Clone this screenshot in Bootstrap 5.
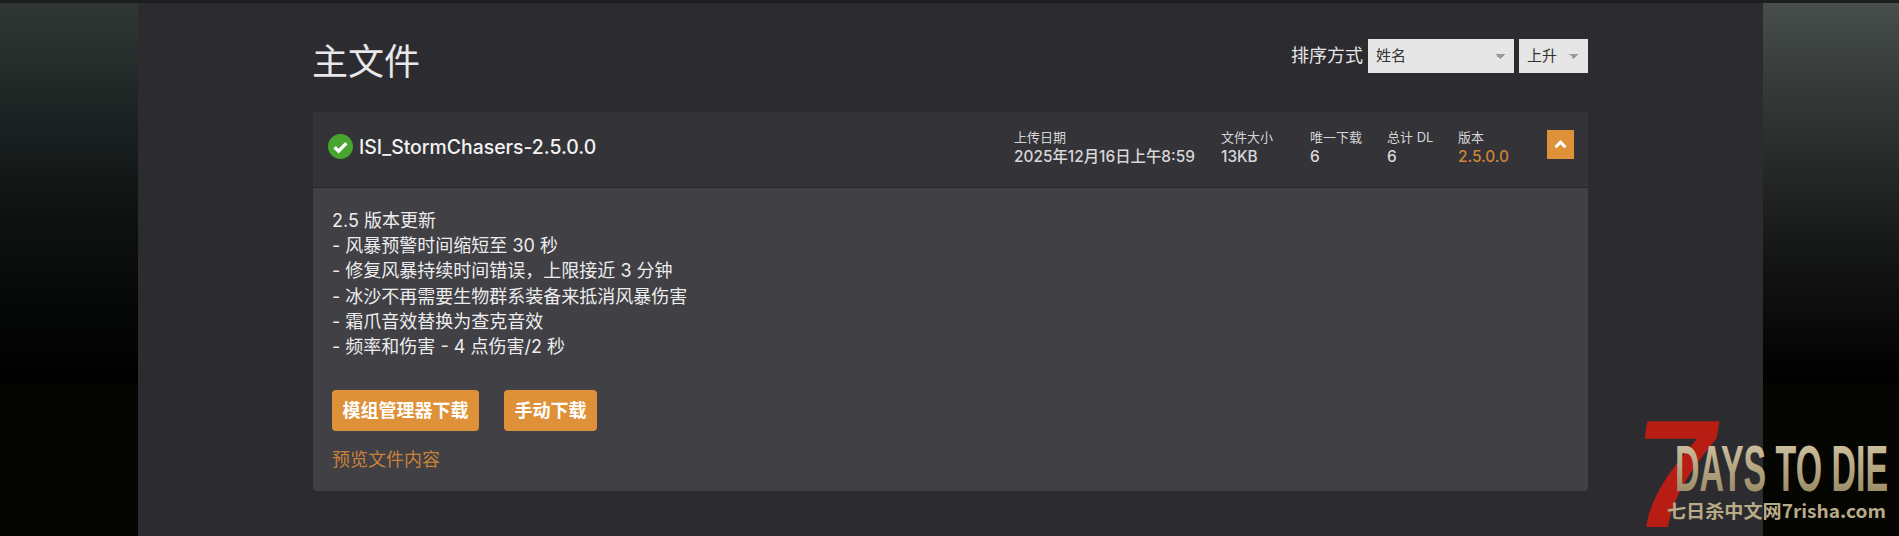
<!doctype html>
<html lang="zh-CN">
<head>
<meta charset="utf-8">
<title>主文件</title>
<link href="https://cdn.jsdelivr.net/npm/bootstrap@5.3.0/dist/css/bootstrap.min.css" rel="stylesheet">
<style>
html,body{height:536px;overflow:hidden}
body{background:#050502;font-family:Inter,"Noto Sans CJK SC","Noto Sans",sans-serif;color:#e6e6e6}
.stage{height:536px;position:relative;border-top:3px solid #1d1f1f}
.side-l{width:138px;flex:none;background:linear-gradient(180deg,#303735 0,#1c2322 110px,#0d1110 220px,#000 377px,#000 381px,#050502 382px)}
.side-r{flex:1 1 0;background:linear-gradient(180deg,#474e4b 0,#2c302e 130px,#131514 260px,#000 377px,#000 381px,#050502 382px)}
.main-col{width:1625px;flex:none;background:#2c2b30;padding:0 175px}
.page-title{font-size:36px;line-height:42px;font-weight:400;color:#e8e8e8;margin:0 0 0 -1px}
.head-row{height:109px}
.title-wrap{padding-top:38px}
.sort-wrap{padding-top:36px;font-size:18px;line-height:34px;color:#e6e6e6}
.sort-label{margin-right:5px}
.sort-select{height:34px;padding:0 0 0 8px;border:0;border-radius:0;font-size:15px;color:#333;background-color:#e6e6e6;
 --bs-form-select-bg-img:none;
 background-image:linear-gradient(45deg,transparent 50%,#999 50%),linear-gradient(-45deg,transparent 50%,#999 50%);
 background-size:5px 5px,5px 5px;background-repeat:no-repeat;background-position:right 14px center,right 9px center}
.sort-a{width:146px}.sort-b{width:69px;margin-left:5px}
.file-card{background:#404045;border:0;border-radius:4px;overflow:hidden;color:#e6e6e6}
.file-head{height:76px;background:#333338;border-bottom:1px solid #29292d;padding:0 14px 0 15px;border-radius:0}
.name-line{margin-top:-5px}
.file-name{font-size:19.4px;font-weight:500;line-height:24px;color:#f2f2f2;margin:0 0 0 6px}
.file-check{width:25px;height:25px;flex:none;margin-top:-1px}
.meta-line{margin-top:-5px}
.meta-box{font-size:13px;line-height:17px;color:#d6d6d6}
.meta-box b{display:block;font-size:15.4px;font-weight:500;line-height:19px;color:#d8d8d8;margin-top:1px}
.meta-box b.ver{color:#cf8437}
.m1{width:207px}.m2{width:89px}.m3{width:77px}.m4{width:71px}.m5{width:89px}
.toggle-btn{width:27px;height:29px;background:#de9138;border:0;border-radius:0;padding:0;display:flex;align-items:center;justify-content:center;margin-top:-5px}
.toggle-btn:hover{background:#de9138}
.file-body{padding:20px 19px 0;height:303px}
.notes{font-size:18px;line-height:25.2px;color:#ededed;margin:0 0 31px;white-space:pre-line}
.dl-btn{background:#de9138;border:0;border-radius:4px;color:#fff;font-size:18px;font-weight:700;line-height:21px;padding:10px 10.5px;height:41px;white-space:nowrap}
.dl-btn:hover{background:#de9138;color:#fff}
.gap-dl{gap:25px}
.preview-link{display:inline-block;margin-top:16px;font-size:18px;line-height:25px;color:#c9823a;text-decoration:none}
.wm{position:absolute;left:1636px;top:412px;width:263px;height:124px}
</style>
</head>
<body>
<div class="stage d-flex">
  <div class="side-l"></div>
  <main class="main-col">
    <div class="head-row d-flex justify-content-between align-items-start">
      <div class="title-wrap"><h2 class="page-title">主文件</h2></div>
      <div class="sort-wrap d-flex align-items-start">
        <span class="sort-label">排序方式</span>
        <select class="form-select sort-select sort-a"><option>姓名</option></select>
        <select class="form-select sort-select sort-b"><option>上升</option></select>
      </div>
    </div>
    <section class="card file-card">
      <div class="card-header file-head d-flex align-items-center justify-content-between">
        <div class="d-flex align-items-center name-line">
          <svg class="file-check" viewBox="0 0 25 25"><circle cx="12.5" cy="12.5" r="12.5" fill="#47a530"/><path d="M6.6 13.2l4 3.9 7.8-8" fill="none" stroke="#fff" stroke-width="3.4"/></svg>
          <h3 class="file-name">ISI_StormChasers-2.5.0.0</h3>
        </div>
        <div class="d-flex align-items-center meta-line">
          <div class="meta-box m1">上传日期<b>2025年12月16日上午8:59</b></div>
          <div class="meta-box m2">文件大小<b>13KB</b></div>
          <div class="meta-box m3">唯一下载<b>6</b></div>
          <div class="meta-box m4">总计 DL<b>6</b></div>
          <div class="meta-box m5">版本<b class="ver">2.5.0.0</b></div>
          <button class="btn toggle-btn" aria-label="收起"><svg width="13" height="9" viewBox="0 0 13 9"><path d="M1.5 7.2l5-5 5 5" fill="none" stroke="#fff" stroke-width="3"/></svg></button>
        </div>
      </div>
      <div class="card-body file-body">
        <p class="notes">2.5 版本更新
- 风暴预警时间缩短至 30 秒
- 修复风暴持续时间错误，上限接近 3 分钟
- 冰沙不再需要生物群系装备来抵消风暴伤害
- 霜爪音效替换为查克音效
- 频率和伤害 - 4 点伤害/2 秒</p>
        <div class="d-flex gap-dl">
          <a class="btn dl-btn" href="#">模组管理器下载</a>
          <a class="btn dl-btn" href="#">手动下载</a>
        </div>
        <a class="preview-link" href="#">预览文件内容</a>
      </div>
    </section>
  </main>
  <div class="side-r"></div>
  <svg class="wm" viewBox="0 0 263 124">
    <defs><linearGradient id="gold" x1="0" y1="0" x2="0" y2="1"><stop offset="0" stop-color="#d9ccab"/><stop offset="1" stop-color="#8f7f5a"/></linearGradient></defs>
    <text transform="translate(-12 112) skewX(-9) scale(1.28 1.28)" font-family="Liberation Sans" font-weight="700" font-size="120" fill="#b81d13">7</text>
    <text x="39" y="76" font-family="Liberation Sans Narrow,Liberation Sans" font-weight="700" font-size="65" fill="url(#gold)" textLength="213" lengthAdjust="spacingAndGlyphs">DAYS TO DIE</text>
    <text x="31" y="103" font-family="Noto Sans CJK SC,sans-serif" font-weight="700" font-size="18" fill="#b9ab88" textLength="219" lengthAdjust="spacingAndGlyphs">七日杀中文网7risha.com</text>
  </svg>
</div>
<script src="https://cdn.jsdelivr.net/npm/bootstrap@5.3.0/dist/js/bootstrap.bundle.min.js"></script>
</body>
</html>
